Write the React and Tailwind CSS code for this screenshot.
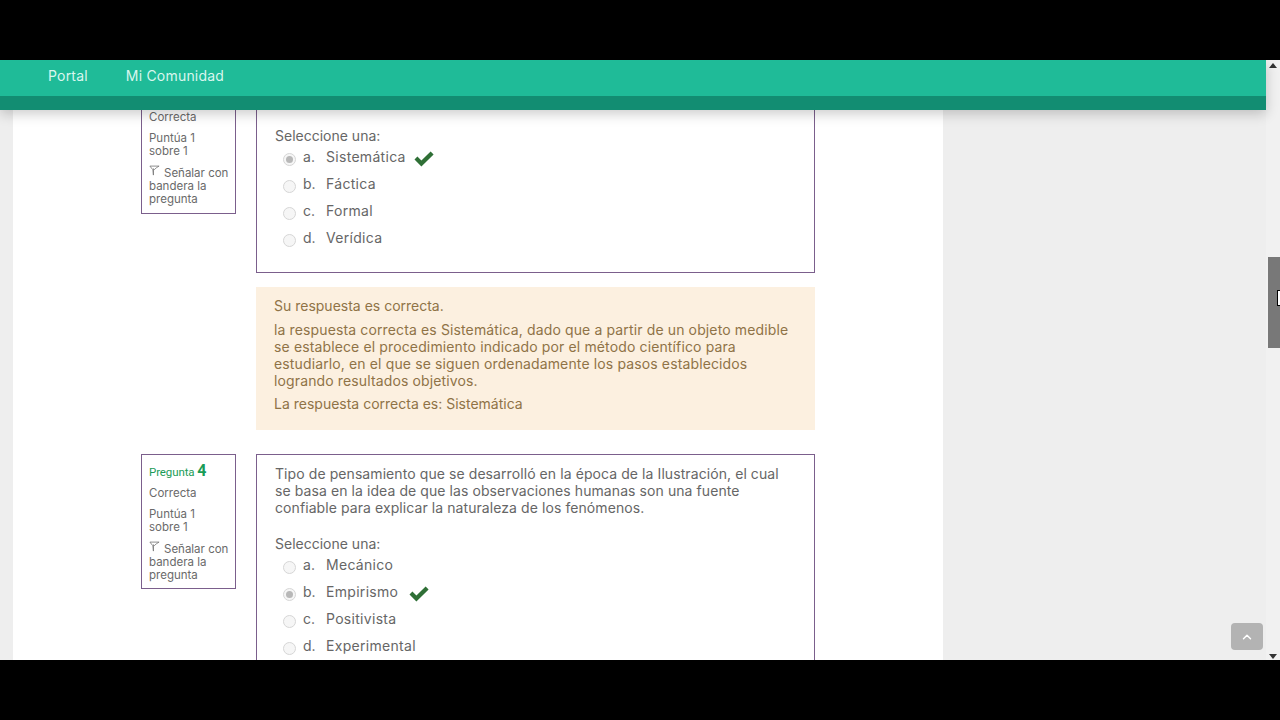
import React from "react";
import { ChevronUp } from "lucide-react";

const font = "font-['Inter','Noto_Sans',sans-serif]";

const Flag = () => (
  <svg viewBox="0 0 12 12" className="inline-block w-[11px] h-[11px] mr-[4px] align-[1px]" fill="none" stroke="#777" strokeWidth="0.9">
    <path d="M1 1.2 L11 1.2 L8 3 L6 5 L5 4 L4.8 11 M1 1.2 L4.2 5.2 L4.8 11" />
  </svg>
);

const Check = () => (
  <svg viewBox="0 0 20 16" className="w-[20px] h-[16px]" fill="#2f6f36">
    <path d="M0.5 8.6 L3.4 5.6 L7.4 9.4 L16.6 0.6 L19.6 3.6 L7.4 15.4 Z" />
  </svg>
);

const Radio = ({ on }) => (
  <span className="w-[13px] h-[13px] mt-[3px] rounded-full border border-[#d6d6d6] bg-[#f6f6f6] flex items-center justify-center shrink-0">
    {on && <span className="w-[7px] h-[7px] rounded-full bg-[#b8b8b8]" />}
  </span>
);

const Option = ({ letter, text, on, checkClass = "ml-[8px]" }) => (
  <div className="flex items-center h-[27px]">
    <div className="ml-[8px] flex items-center">
      <Radio on={on} />
    </div>
    <span className="ml-[7px] w-[23px] -mt-[3px]">{letter}.</span>
    <span className="-mt-[3px] tracking-[0.3px]">{text}</span>
    {on && (
      <span className={`${checkClass} mt-[3px]`}>
        <Check />
      </span>
    )}
  </div>
);

const InfoBox = ({ children, className }) => (
  <div className={`w-[95px] border border-[#7b5f8c] bg-white px-[7px] text-[11.5px] leading-[13px] text-[#6a6a6a] ${className}`}>
    {children}
  </div>
);

const InfoBody = () => (
  <>
    <p>Correcta</p>
    <p className="mt-[8px]">Puntúa 1<br />sobre 1</p>
    <p className="mt-[7px] whitespace-nowrap"><Flag />Señalar con<br />bandera la<br />pregunta</p>
  </>
);

const Options = ({ items }) => (
  <div>
    {items.map((o) => (
      <Option key={o.letter} {...o} />
    ))}
  </div>
);

export default function App() {
  return (
    <div className={`w-[1280px] h-[720px] bg-black py-[60px] overflow-hidden ${font}`}>
      <div className="flex h-[600px]">
        <div className="w-[1266px] flex flex-col">
          <nav className="relative z-10 shadow-[0_4px_12px_rgba(0,0,0,0.2)]">
            <div className="h-[36px] bg-[#1fbb98] flex items-center pl-[48px] pb-[6px] gap-[38px] text-[14px] tracking-[0.2px] text-[#d9f6ee]">
              <a>Portal</a>
              <a>Mi Comunidad</a>
            </div>
            <div className="h-[14px] bg-[#128d72]" />
          </nav>

          <main className="relative flex-1 bg-[#eeeeee] overflow-hidden">
            <div className="ml-[13px] w-[930px] h-full bg-white pl-[128px] text-[14px] leading-[17px] text-[#666666]">
              <div className="flex items-start gap-[20px]">
                <InfoBox className="border-t-0 h-[104px] pt-[1px]">
                  <InfoBody />
                </InfoBox>
                <div className="w-[559px] h-[163px] border border-t-0 border-[#7b5f8c] pl-[18px] pt-[17px]">
                  <p>Seleccione una:</p>
                  <Options
                    items={[
                      { letter: "a", text: "Sistemática", on: true },
                      { letter: "b", text: "Fáctica" },
                      { letter: "c", text: "Formal" },
                      { letter: "d", text: "Verídica" },
                    ]}
                  />
                </div>
              </div>

              <div className="ml-[115px] mt-[14px] w-[559px] h-[143px] bg-[#fcf0e0] px-[18px] pt-[10px] text-[#8f7347]">
                <p>Su respuesta es correcta.</p>
                <p className="mt-[7px] tracking-[0.13px]">
                  la respuesta correcta es Sistemática, dado que a partir de un objeto medible<br />
                  se establece el procedimiento indicado por el método científico para<br />
                  estudiarlo, en el que se siguen ordenadamente los pasos establecidos<br />
                  logrando resultados objetivos.
                </p>
                <p className="mt-[6px]">La respuesta correcta es: Sistemática</p>
              </div>

              <div className="flex items-start gap-[20px] mt-[24px]">
                <InfoBox className="h-[135px] pt-[7px]">
                  <p className="font-['Roboto',sans-serif] text-[#1a9c57] text-[11.5px] tracking-[-0.1px] leading-[17px] mb-[6px] whitespace-nowrap">
                    Pregunta <b className="text-[16px]">4</b>
                  </p>
                  <InfoBody />
                </InfoBox>
                <div className="w-[559px] h-[240px] border border-[#7b5f8c] pl-[18px] pt-[10px]">
                  <p className="tracking-[0.08px]">
                    Tipo de pensamiento que se desarrolló en la época de la Ilustración, el cual<br />
                    se basa en la idea de que las observaciones humanas son una fuente<br />
                    confiable para explicar la naturaleza de los fenómenos.
                  </p>
                  <p className="mt-[19px]">Seleccione una:</p>
                  <Options
                    items={[
                      { letter: "a", text: "Mecánico" },
                      { letter: "b", text: "Empirismo", on: true, checkClass: "ml-[11px]" },
                      { letter: "c", text: "Positivista" },
                      { letter: "d", text: "Experimental" },
                    ]}
                  />
                </div>
              </div>
            </div>

            <button className="absolute left-[1231px] top-[513px] w-[32px] h-[27px] rounded-[4px] bg-[#b3b3b3] flex items-center justify-center text-white">
              <ChevronUp size={14} strokeWidth={2.5} />
            </button>
          </main>
        </div>

        <div className="relative w-[14px] bg-[#f1f1f1] flex flex-col items-center justify-between pt-[3px] pb-[1px]">
          <span className="w-0 h-0 border-x-[4px] border-x-transparent border-b-[5px] border-b-[#333]" />
          <span className="w-0 h-0 border-x-[4px] border-x-transparent border-t-[5px] border-t-[#333]" />
          <div className="absolute left-[2px] right-0 top-[197px] h-[91px] bg-[#787878]" />
          <span className="absolute left-[11px] top-[230px] w-[3px] h-[16px] bg-white border-l border-y border-black" />
        </div>
      </div>
    </div>
  );
}
